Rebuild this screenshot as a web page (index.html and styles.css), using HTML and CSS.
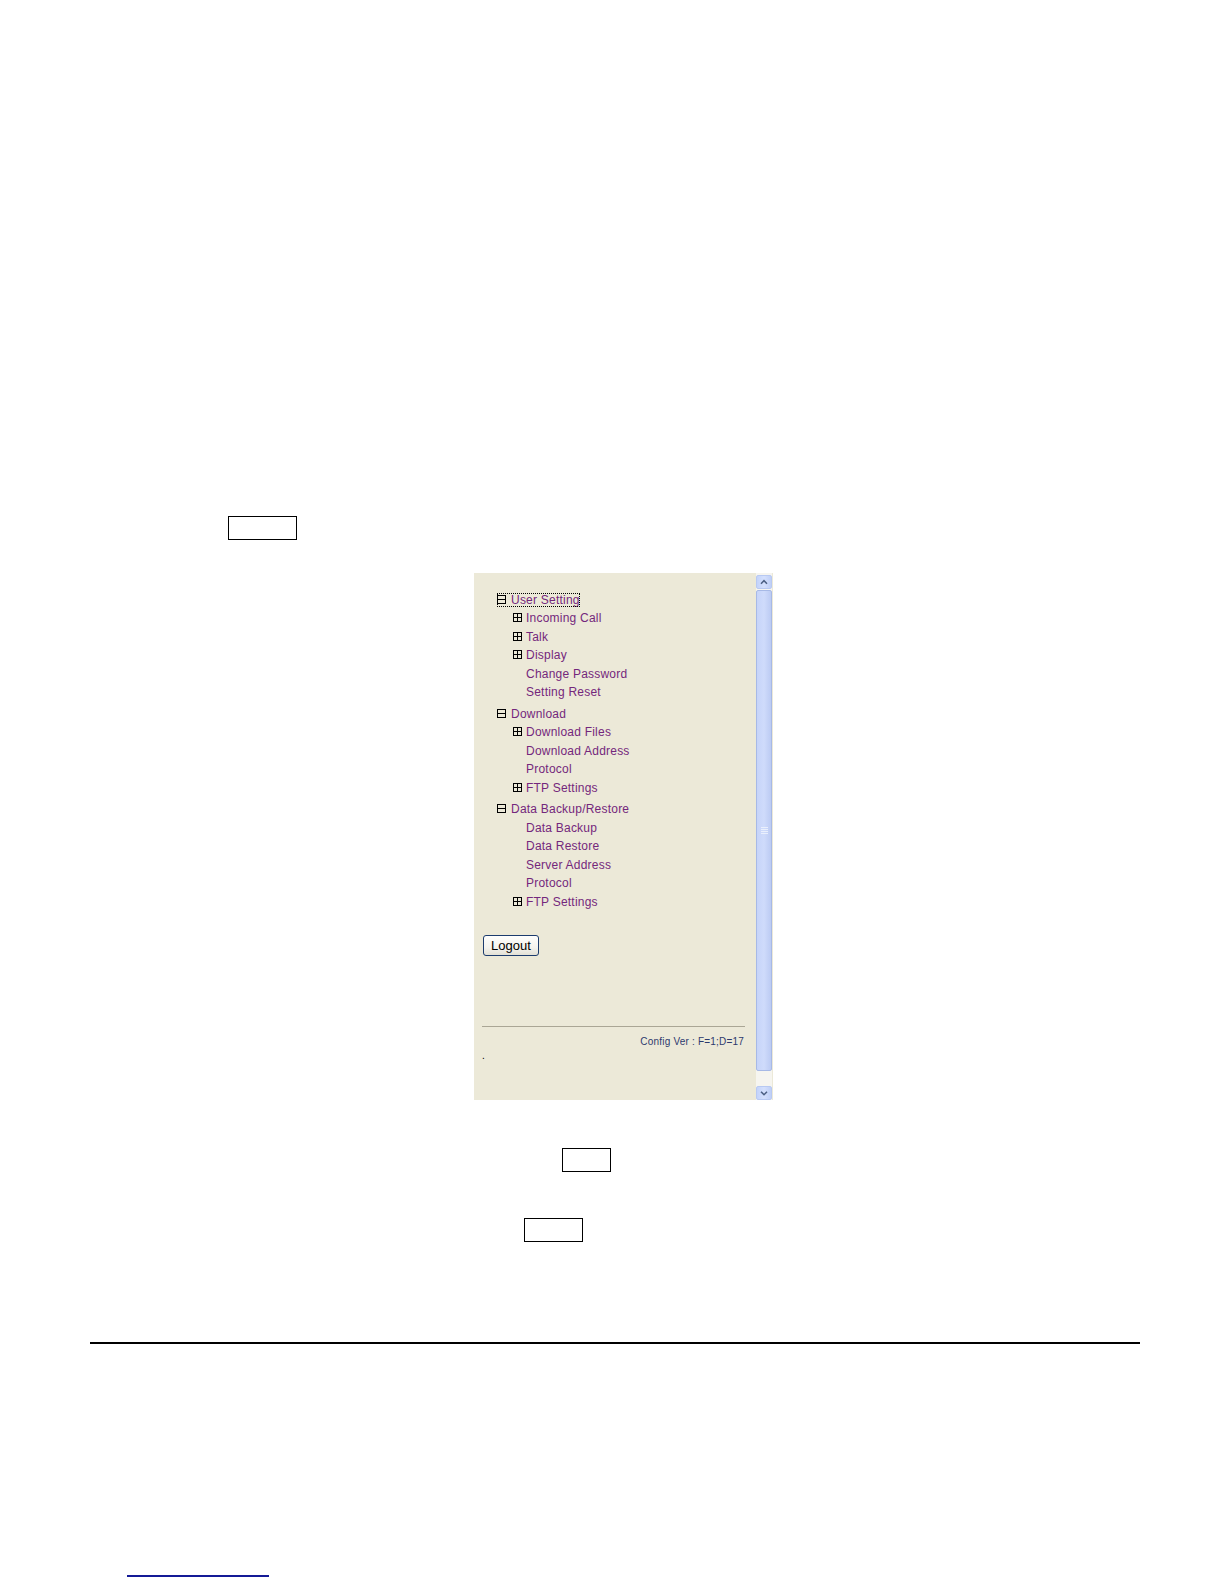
FILE: index.html
```html
<!DOCTYPE html>
<html lang="en">
<head>
<meta charset="utf-8">
<title>Web User Interface Menu</title>
<link rel="stylesheet" href="styles.css">
</head>
<body>
<div class="page">
  <div class="box box-a"></div>

  <div class="panel">
    <div class="panel-content">
      <div class="tree">
        <div class="group">
          <div class="row top"><span class="focus"><svg class="ico" viewBox="0 0 9 9"><rect x="0.5" y="0.5" width="8" height="8"/><line x1="1" y1="4.5" x2="8" y2="4.5"/></svg><span class="lbl">User Setting</span></span></div>
          <div class="row child"><svg class="ico" viewBox="0 0 9 9"><rect x="0.5" y="0.5" width="8" height="8"/><line x1="1" y1="4.5" x2="8" y2="4.5"/><line x1="4.5" y1="1" x2="4.5" y2="8"/></svg><span class="lbl">Incoming Call</span></div>
          <div class="row child"><svg class="ico" viewBox="0 0 9 9"><rect x="0.5" y="0.5" width="8" height="8"/><line x1="1" y1="4.5" x2="8" y2="4.5"/><line x1="4.5" y1="1" x2="4.5" y2="8"/></svg><span class="lbl">Talk</span></div>
          <div class="row child"><svg class="ico" viewBox="0 0 9 9"><rect x="0.5" y="0.5" width="8" height="8"/><line x1="1" y1="4.5" x2="8" y2="4.5"/><line x1="4.5" y1="1" x2="4.5" y2="8"/></svg><span class="lbl">Display</span></div>
          <div class="row leaf"><span class="lbl">Change Password</span></div>
          <div class="row leaf"><span class="lbl">Setting Reset</span></div>
        </div>
        <div class="group">
          <div class="row top"><svg class="ico" viewBox="0 0 9 9"><rect x="0.5" y="0.5" width="8" height="8"/><line x1="1" y1="4.5" x2="8" y2="4.5"/></svg><span class="lbl">Download</span></div>
          <div class="row child"><svg class="ico" viewBox="0 0 9 9"><rect x="0.5" y="0.5" width="8" height="8"/><line x1="1" y1="4.5" x2="8" y2="4.5"/><line x1="4.5" y1="1" x2="4.5" y2="8"/></svg><span class="lbl">Download Files</span></div>
          <div class="row leaf"><span class="lbl">Download Address</span></div>
          <div class="row leaf"><span class="lbl">Protocol</span></div>
          <div class="row child"><svg class="ico" viewBox="0 0 9 9"><rect x="0.5" y="0.5" width="8" height="8"/><line x1="1" y1="4.5" x2="8" y2="4.5"/><line x1="4.5" y1="1" x2="4.5" y2="8"/></svg><span class="lbl">FTP Settings</span></div>
        </div>
        <div class="group">
          <div class="row top"><svg class="ico" viewBox="0 0 9 9"><rect x="0.5" y="0.5" width="8" height="8"/><line x1="1" y1="4.5" x2="8" y2="4.5"/></svg><span class="lbl">Data Backup/Restore</span></div>
          <div class="row leaf"><span class="lbl">Data Backup</span></div>
          <div class="row leaf"><span class="lbl">Data Restore</span></div>
          <div class="row leaf"><span class="lbl">Server Address</span></div>
          <div class="row leaf"><span class="lbl">Protocol</span></div>
          <div class="row child"><svg class="ico" viewBox="0 0 9 9"><rect x="0.5" y="0.5" width="8" height="8"/><line x1="1" y1="4.5" x2="8" y2="4.5"/><line x1="4.5" y1="1" x2="4.5" y2="8"/></svg><span class="lbl">FTP Settings</span></div>
        </div>
      </div>
      <button class="logout" type="button">Logout</button>
      <div class="sep"></div>
      <div class="config">Config Ver : F=1;D=17</div>
      <div class="dot">.</div>
    </div>
    <div class="scrollbar">
      <div class="sb-btn"><svg viewBox="0 0 16 14"><polyline points="4.5,9 8,5.5 11.5,9"/></svg></div>
      <div class="sb-thumb"><svg class="grip" viewBox="0 0 8 8"><line x1="0" y1="0.5" x2="8" y2="0.5"/><line x1="0" y1="2.5" x2="8" y2="2.5"/><line x1="0" y1="4.5" x2="8" y2="4.5"/><line x1="0" y1="6.5" x2="8" y2="6.5"/></svg></div>
      <div class="sb-track"></div>
      <div class="sb-btn"><svg viewBox="0 0 16 14"><polyline points="4.5,5.5 8,9 11.5,5.5"/></svg></div>
    </div>
  </div>

  <div class="box box-b"></div>
  <div class="box box-c"></div>

  <div class="rule"></div>
  <div class="link-line"></div>
</div>
</body>
</html>
```

FILE: styles.css
```css
html, body {
  margin: 0;
  padding: 0;
  background: #ffffff;
}

body {
  font-family: "Liberation Sans", Arial, sans-serif;
}

.page {
  display: flow-root;
  width: 1224px;
  height: 1584px;
  overflow: hidden;
}

.box {
  box-sizing: border-box;
  border: 1.4px solid #000;
  height: 24px;
}

.box-a {
  margin: 516px 0 0 228px;
  width: 69px;
}

.box-b {
  margin: 48px 0 0 562px;
  width: 49px;
}

.box-c {
  margin: 46px 0 0 524px;
  width: 59px;
}

/* ---------- panel ---------- */
.panel {
  margin: 33px 0 0 474px;
  width: 299px;
  height: 527px;
  display: flex;
  background: #ece9d8;
  box-sizing: border-box;
  padding-right: 1px;
}

.panel-content {
  width: 282px;
  padding-top: 17.5px;
  box-sizing: border-box;
  display: flex;
  flex-direction: column;
  align-items: flex-start;
}

.tree {
  align-self: stretch;
}

.group + .group {
  margin-top: 3.2px;
}

.row {
  font-size: 12px;
  line-height: 18.5px;
  height: 18.5px;
  color: #74277c;
  letter-spacing: 0.22px;
  white-space: nowrap;
}

.row.top {
  padding-left: 23px;
}

.row.child {
  padding-left: 39px;
}

.row.leaf {
  padding-left: 52px;
}

.ico {
  display: inline-block;
  width: 9px;
  height: 9px;
  vertical-align: baseline;
  margin-right: 4px;
  fill: none;
  stroke: #000;
  stroke-width: 1;
  shape-rendering: crispEdges;
}

.row.top .ico {
  margin-right: 5px;
}

.focus {
  outline: 1px dotted #000;
  outline-offset: -1px;
}

.logout {
  margin: 24px 0 0 9px;
  width: 56px;
  height: 21px;
  padding: 0;
  border: 1px solid #1c3c6e;
  border-radius: 3px;
  background: linear-gradient(#fefefd, #f4f3ee 60%, #e3e1d6);
  font-family: "Liberation Sans", Arial, sans-serif;
  font-size: 13px;
  color: #000;
  line-height: 19px;
}

.sep {
  margin: 70px 0 0 8px;
  width: 263px;
  height: 0;
  border-top: 1px solid #aaa695;
}

.config {
  align-self: stretch;
  margin-top: 8.5px;
  padding-right: 12px;
  text-align: right;
  font-size: 10px;
  line-height: 12px;
  letter-spacing: 0.2px;
  color: #2c3a6e;
}

.dot {
  margin: 2.5px 0 0 8px;
  font-size: 10px;
  line-height: 12px;
  color: #000;
}

/* ---------- scrollbar ---------- */
.scrollbar {
  width: 16px;
  padding-top: 2px;
  box-sizing: border-box;
  display: flex;
  flex-direction: column;
  background: #f6f5f0;
}

.sb-btn {
  height: 14px;
  box-sizing: border-box;
  border: 1px solid #b8c9f2;
  border-radius: 2px;
  background: linear-gradient(90deg, #c3d3fb, #d4e0fd 50%, #bfcff7);
  display: flex;
}

.sb-btn svg {
  width: 100%;
  height: 100%;
  fill: none;
  stroke: #4d6185;
  stroke-width: 1.8;
}

.sb-thumb {
  margin-top: 1px;
  height: 481px;
  box-sizing: border-box;
  border: 1px solid #a7b9e6;
  border-radius: 2px;
  background: linear-gradient(90deg, #c6d4f9, #cfdbfb 50%, #bccbf3);
  display: flex;
  align-items: center;
  justify-content: center;
}

.grip {
  width: 7px;
  height: 8px;
  stroke: #eef2fd;
  stroke-width: 1;
  shape-rendering: crispEdges;
}

.sb-track {
  flex: 1;
}

/* ---------- bottom ---------- */
.rule {
  margin: 100px 0 0 90px;
  width: 1050px;
  height: 2px;
  background: #000;
}

.link-line {
  margin: 231px 0 0 127px;
  width: 142px;
  height: 1.5px;
  background: #141a96;
}
```
